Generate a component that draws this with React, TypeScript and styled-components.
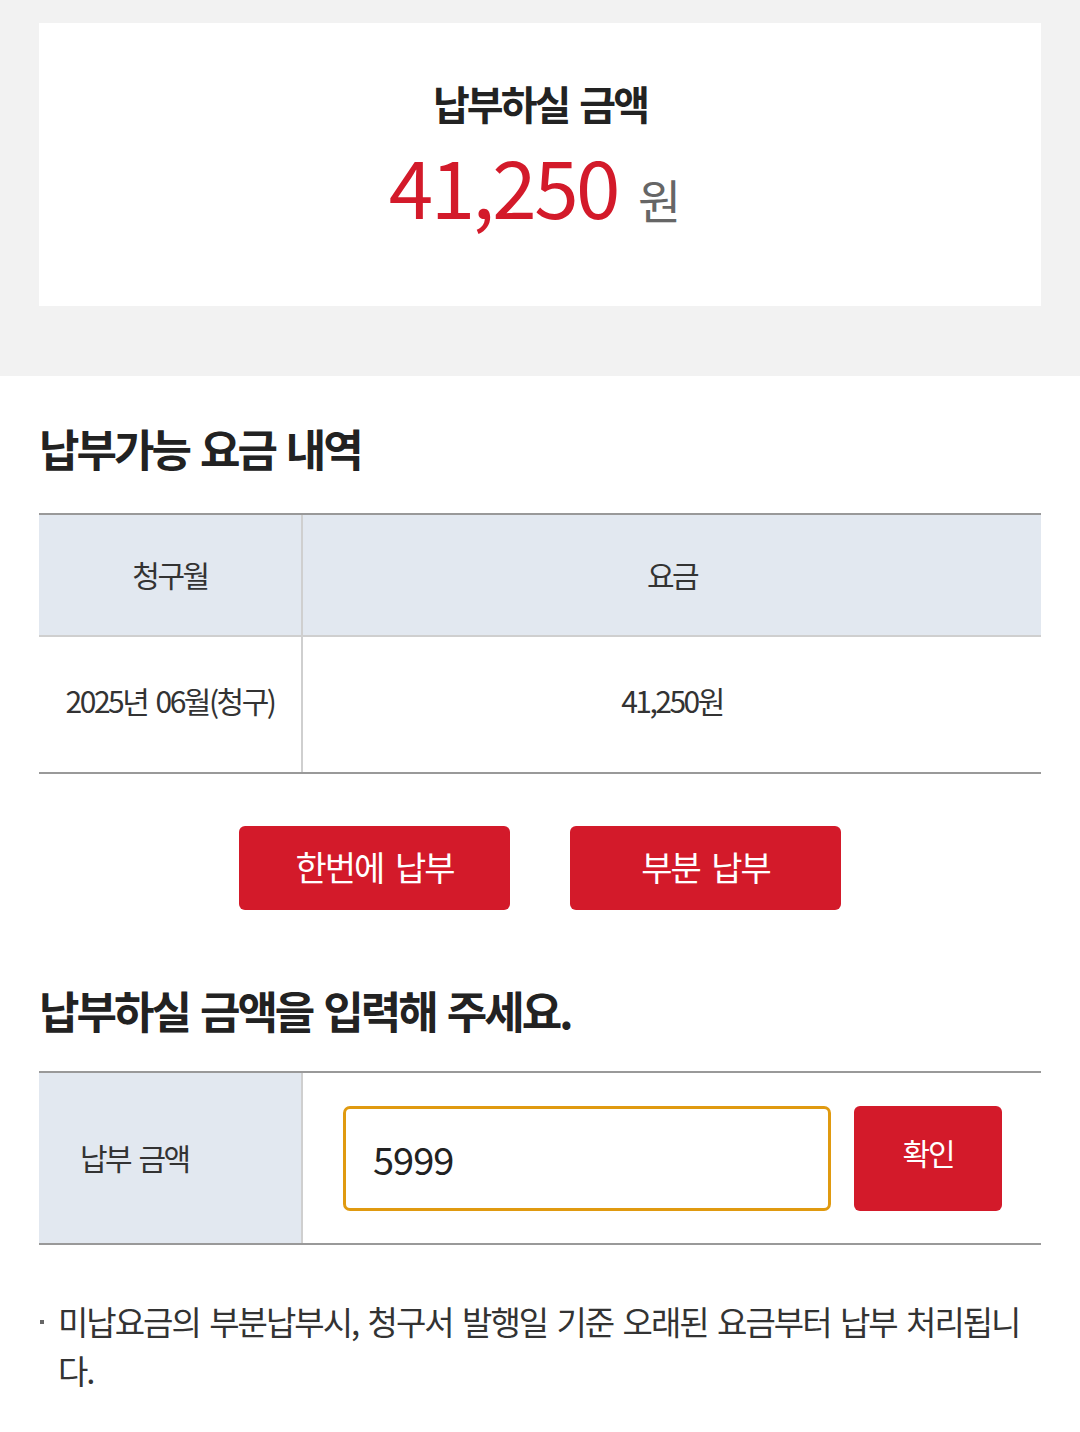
import styled, { createGlobalStyle } from 'styled-components';

const GlobalStyle = createGlobalStyle`
  html, body {
    margin: 0;
    padding: 0;
    background: #ffffff;
  }
  body {
    font-family: 'Noto Sans CJK KR', 'Noto Sans', sans-serif;
    color: #222;
  }
  * {
    box-sizing: border-box;
  }
`;

const RED = '#d31a2a';

const Page = styled.div`
  width: 1080px;
`;

const SummaryArea = styled.section`
  background: #f2f2f2;
  padding: 23px 39px 70px;
`;

const SummaryCard = styled.div`
  background: #fff;
  height: 283px;
  display: flex;
  flex-direction: column;
  align-items: center;
  padding-top: 58px;
`;

const SummaryTitle = styled.h2`
  margin: 0;
  font-size: 40px;
  line-height: 44px;
  font-weight: 700;
  letter-spacing: -3px;
  word-spacing: 5px;
  color: #222;
`;

const AmountRow = styled.div`
  display: flex;
  align-items: baseline;
  gap: 20px;
  margin-top: 17px;
  padding-right: 10px;
`;

const AmountValue = styled.span`
  font-size: 80px;
  line-height: 84px;
  font-weight: 400;
  letter-spacing: -2.5px;
  color: ${RED};
`;

const AmountUnit = styled.span`
  font-size: 47px;
  color: #666;
`;

const Content = styled.main`
  padding: 44px 39px 40px;
`;

const SectionTitle = styled.h3`
  margin: 0;
  font-size: 44px;
  line-height: 56px;
  font-weight: 700;
  letter-spacing: -3px;
  word-spacing: 4px;
  color: #222;
`;

const Table = styled.div<{ $top: number }>`
  margin-top: ${(p) => p.$top}px;
  display: grid;
  grid-template-columns: 264px 1fr;
  border-top: 2px solid #999;
  border-bottom: 2px solid #999;
`;

const Cell = styled.div<{ $head?: boolean; $h: number; $align?: 'left' | 'center'; $divider?: boolean; $lift?: number }>`
  height: ${(p) => p.$h}px;
  display: flex;
  align-items: center;
  justify-content: ${(p) => (p.$align === 'left' ? 'flex-start' : 'center')};
  padding-left: ${(p) => (p.$align === 'left' ? '41px' : '0')};
  padding-bottom: ${(p) => p.$lift ?? 0}px;
  background: ${(p) => (p.$head ? '#e2e8f0' : '#fff')};
  border-bottom: ${(p) => (p.$divider ? '2px solid #cfcfcf' : 'none')};
  font-size: 30px;
  letter-spacing: -2.5px;
  word-spacing: 4px;
  color: #333;

  &:nth-child(odd) {
    border-right: 2px solid #cfcfcf;
  }
`;

const ButtonRow = styled.div`
  display: flex;
  justify-content: center;
  gap: 60px;
  margin-top: 52px;
`;

const RedButton = styled.button<{ $w: number; $h: number; $size: number }>`
  width: ${(p) => p.$w}px;
  height: ${(p) => p.$h}px;
  border: none;
  border-radius: 6px;
  background: ${RED};
  color: #fff;
  font-family: 'Noto Sans CJK KR', 'Noto Sans', sans-serif;
  font-size: ${(p) => p.$size}px;
  letter-spacing: -2px;
  word-spacing: 6px;
  padding: 0 0 4px;
  cursor: pointer;
`;

const SecondTitle = styled(SectionTitle)`
  margin-top: 72px;
`;

const InputCell = styled.div`
  height: 170px;
  display: flex;
  align-items: center;
  gap: 23px;
  padding-left: 40px;
`;

const AmountInput = styled.input`
  width: 488px;
  height: 105px;
  border: 3px solid #e09a10;
  border-radius: 7px;
  padding: 0 0 0 27px;
  font-family: 'Noto Sans CJK KR', 'Noto Sans', sans-serif;
  font-size: 38px;
  letter-spacing: -1px;
  color: #222;
  outline: none;
`;

const ConfirmButton = styled(RedButton)`
  padding-bottom: 12px;
`;

const Note = styled.p`
  margin: 52px 0 0;
  position: relative;
  padding-left: 19px;
  font-size: 33px;
  line-height: 49px;
  letter-spacing: -2px;
  word-spacing: 4px;
  color: #333;

  &::before {
    content: '';
    position: absolute;
    left: 1px;
    top: 23px;
    width: 4px;
    height: 4px;
    background: #666;
  }
`;

const App = function App(): JSX.Element {
  return (
    <Page>
      <GlobalStyle />
      <SummaryArea>
        <SummaryCard>
          <SummaryTitle>납부하실 금액</SummaryTitle>
          <AmountRow>
            <AmountValue>41,250</AmountValue>
            <AmountUnit>원</AmountUnit>
          </AmountRow>
        </SummaryCard>
      </SummaryArea>

      <Content>
        <SectionTitle>납부가능 요금 내역</SectionTitle>
        <Table $top={37}>
          <Cell $head $h={122} $divider $lift={2}>
            청구월
          </Cell>
          <Cell $head $h={122} $divider $lift={2}>
            요금
          </Cell>
          <Cell $h={135} $lift={10}>
            2025년 06월(청구)
          </Cell>
          <Cell $h={135} $lift={10}>
            41,250원
          </Cell>
        </Table>

        <ButtonRow>
          <RedButton type="button" $w={271} $h={84} $size={34}>
            한번에 납부
          </RedButton>
          <RedButton type="button" $w={271} $h={84} $size={34}>
            부분 납부
          </RedButton>
        </ButtonRow>

        <SecondTitle>납부하실 금액을 입력해 주세요.</SecondTitle>
        <Table $top={33}>
          <Cell $head $h={170} $align="left" $lift={2}>
            납부 금액
          </Cell>
          <InputCell>
            <AmountInput defaultValue="5999" inputMode="numeric" />
            <ConfirmButton type="button" $w={148} $h={105} $size={30}>
              확인
            </ConfirmButton>
          </InputCell>
        </Table>

        <Note>미납요금의 부분납부시, 청구서 발행일 기준 오래된 요금부터 납부 처리됩니다.</Note>
      </Content>
    </Page>
  );
};

export default App;
